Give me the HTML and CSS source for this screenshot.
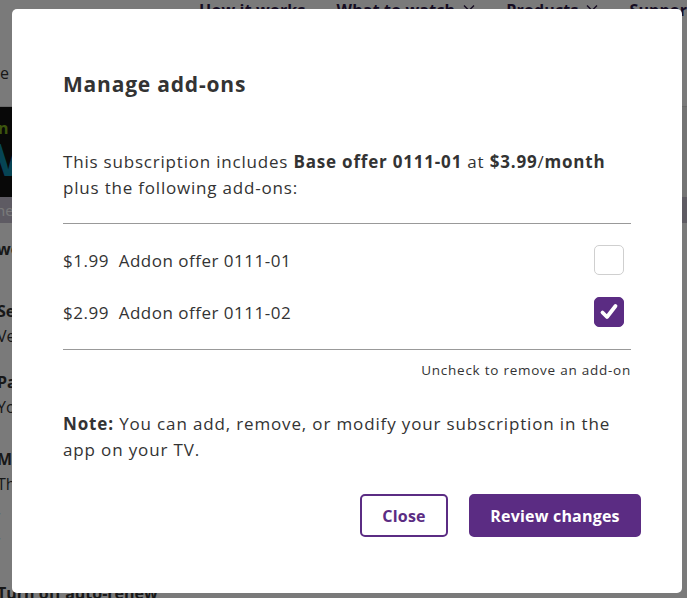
FILE: index.html
```html
<!DOCTYPE html>
<html lang="en">
<head>
<meta charset="utf-8">
<title>Manage add-ons</title>
<link rel="stylesheet" href="styles.css">
</head>
<body>
<div class="page">
  <nav class="nav">
    <span class="nav-item">How it works</span>
    <span class="nav-item">What to watch <svg class="chev" viewBox="0 0 12 8" width="12" height="8"><path d="M1 1.5 L6 6.5 L11 1.5" fill="none" stroke="#2e1a47" stroke-width="1.4"/></svg></span>
    <span class="nav-item">Products <svg class="chev" viewBox="0 0 12 8" width="12" height="8"><path d="M1 1.5 L6 6.5 L11 1.5" fill="none" stroke="#2e1a47" stroke-width="1.4"/></svg></span>
    <span class="nav-item">Support</span>
  </nav>
  <div class="sub-line"><span class="frag">e</span></div>
  <div class="hero">
    <div class="hero-img"><span class="hero-small">n</span><span class="hero-big">V</span></div>
  </div>
  <div class="hero-bar"><span class="hero-bar-text">he</span></div>
  <div class="col">
    <p class="frag-b first">we</p>
    <p class="frag-b gap-a">Se</p>
    <p class="frag">Ve</p>
    <p class="frag-b gap-b">Pa</p>
    <p class="frag">Yo</p>
    <p class="frag-b gap-c">Ma</p>
    <p class="frag">Th</p>
    <p class="frag">,</p>
    <p class="frag">,</p>
    <p class="frag-b gap-d">Turn off auto-renew</p>
  </div>
</div>

<div class="overlay"></div>

<div class="modal" role="dialog">
  <h2 class="title">Manage add-ons</h2>
  <p class="intro">This subscription includes <b>Base offer 0111-01</b> at <b>$3.99</b>/<b>month</b> plus the following add-ons:</p>
  <div class="addons">
    <label class="addon">
      <span class="addon-name">$1.99&nbsp; Addon offer 0111-01</span>
      <span class="box"></span>
    </label>
    <label class="addon">
      <span class="addon-name">$2.99&nbsp; Addon offer 0111-02</span>
      <span class="box checked">
        <svg viewBox="0 0 30 30" width="30" height="30"><path d="M8.5 15.5 L13 20 L21.5 9" fill="none" stroke="#fff" stroke-width="3.8" stroke-linecap="round" stroke-linejoin="round"/></svg>
      </span>
    </label>
  </div>
  <p class="hint">Uncheck to remove an add-on</p>
  <p class="note"><b>Note:</b> You can add, remove, or modify your subscription in the app on your TV.</p>
  <div class="actions">
    <button class="btn btn-outline">Close</button>
    <button class="btn btn-solid">Review changes</button>
  </div>
</div>
</body>
</html>
```
FILE: styles.css
```css
* { box-sizing: border-box; }
html, body { margin: 0; padding: 0; }
body {
  width: 687px;
  height: 598px;
  overflow: hidden;
  background: #fff;
  font-family: "Open Sans", "Liberation Sans", sans-serif;
  color: #333;
}
.page {
  width: 687px;
  height: 598px;
  overflow: hidden;
}
.nav {
  display: flex;
  gap: 31px;
  padding-left: 199px;
  height: 40px;
  margin-top: -1px;
  font-weight: 700;
  font-size: 16px;
  line-height: 22px;
  letter-spacing: 0.15px;
  color: #2e1a47;
  white-space: nowrap;
}
.nav-item { display: inline-flex; align-items: flex-start; gap: 8px; }
.chev { margin-top: 5px; }
.sub-line {
  height: 68px;
  border-bottom: 1px solid #ddd;
  padding-top: 22px;
  font-size: 16px;
}
.frag, .frag-b { margin: 0; font-size: 16px; line-height: 25px; color: #333; white-space: nowrap; }
.frag-b { font-weight: 700; }
.hero {
  height: 90px;
  background: #f2f2f2;
}
.hero-img {
  width: 300px;
  height: 90px;
  background: #111;
  position: relative;
  overflow: hidden;
}
.hero-small { position: absolute; left: -2px; top: 10px; font-weight: 700; font-size: 16px; color: #7db21f; }
.hero-big { position: absolute; left: -6px; top: 22px; font-weight: 700; font-size: 44px; color: #0e8fb0; }
.hero-bar {
  height: 26px;
  background: #c4bfd0;
  padding-top: 2px;
}
.hero-bar-text { font-size: 15px; color: #fff; margin-left: -4px; }
.col { padding-top: 16px; margin-left: -3px; }
.first { line-height: 20px; }
.gap-a { margin-top: 40px !important; }
.gap-b { margin-top: 21px !important; }
.gap-c { margin-top: 27px !important; }
.gap-d { margin-top: 34px !important; }

.overlay {
  position: fixed;
  inset: 0;
  background: rgba(0, 0, 0, 0.52);
}
.modal {
  position: fixed;
  left: 12px;
  top: 9px;
  width: 670px;
  height: 584px;
  background: #fff;
  border-radius: 5px;
  padding: 63px 51px 0;
  color: #333;
}
.title {
  margin: 0;
  font-size: 21px;
  line-height: 24px;
  font-weight: 700;
  letter-spacing: 0.8px;
  color: #333;
}
.intro {
  margin: 53px 0 0;
  font-size: 17px;
  line-height: 26px;
  letter-spacing: 0.8px;
}
.intro b, .note b { font-weight: 700; }
.addons {
  margin-top: 22px;
  border-top: 1px solid #999;
  border-bottom: 1px solid #999;
  padding: 10px 0 11px;
}
.addon {
  display: flex;
  align-items: center;
  justify-content: space-between;
  height: 52px;
  font-size: 17px;
  letter-spacing: 0.5px;
}
.box {
  width: 30px;
  height: 30px;
  margin-right: 7px;
  border: 1px solid #cfcfcf;
  border-radius: 5px;
  display: block;
}
.box.checked {
  background: #5b2c83;
  border-color: #5b2c83;
}
.box svg { display: block; margin: -1px; }
.hint {
  margin: 10px 0 0;
  text-align: right;
  font-size: 13.5px;
  line-height: 20px;
  letter-spacing: 0.75px;
}
.note {
  margin: 31px 0 0;
  font-size: 17px;
  line-height: 26px;
  letter-spacing: 0.85px;
}
.actions {
  margin-top: 31px;
  margin-right: -10px;
  display: flex;
  justify-content: flex-end;
  gap: 21px;
}
.btn {
  height: 43px;
  border-radius: 5px;
  font-family: inherit;
  font-weight: 700;
  font-size: 16px;
  letter-spacing: 0.2px;
  border: 2px solid #5b2c83;
  padding: 0;
}
.btn-outline {
  width: 88px;
  background: #fff;
  color: #5b2c83;
}
.btn-solid {
  width: 172px;
  background: #5b2c83;
  color: #fff;
}
```
